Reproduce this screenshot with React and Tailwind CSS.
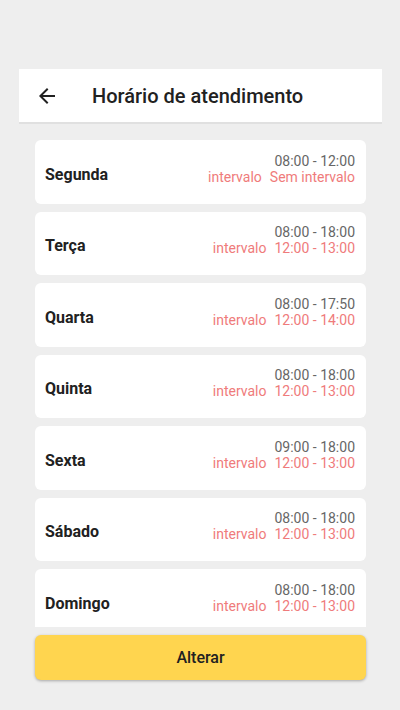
import React from "react";

const days = [
  { name: "Segunda", hours: "08:00 - 12:00", pause: "Sem intervalo" },
  { name: "Terça", hours: "08:00 - 18:00", pause: "12:00 - 13:00" },
  { name: "Quarta", hours: "08:00 - 17:50", pause: "12:00 - 14:00" },
  { name: "Quinta", hours: "08:00 - 18:00", pause: "12:00 - 13:00" },
  { name: "Sexta", hours: "09:00 - 18:00", pause: "12:00 - 13:00" },
  { name: "Sábado", hours: "08:00 - 18:00", pause: "12:00 - 13:00" },
  { name: "Domingo", hours: "08:00 - 18:00", pause: "12:00 - 13:00" },
];

const App = () => {
  return (
    <div className="min-h-screen bg-[#eeeeee] pt-[69px] font-['Roboto',sans-serif]">
      <div className="mx-[19px] w-[363px]">
        <div className="flex h-[55px] items-center border-b-2 border-[#e0e0e0] bg-white pl-4">
          <svg width="24" height="24" viewBox="0 0 24 24" className="text-[#212121]">
            <path
              fill="currentColor"
              d="M20 11H7.83l5.59-5.59L12 4l-8 8 8 8 1.41-1.41L7.83 13H20v-2z"
            />
          </svg>
          <h1 className="ml-[33px] text-[20px] font-medium text-[#212121]">
            Horário de atendimento
          </h1>
        </div>

        <div className="h-[503px] overflow-hidden px-4 pt-4">
          <div className="flex flex-col gap-2">
            {days.map((d) => (
              <div
                key={d.name}
                className="flex h-[63.5px] shrink-0 items-end justify-between rounded-md bg-white pb-[19px] pl-[10px] pr-[11px]"
              >
                <span className="mb-[2px] text-[16px] font-bold leading-4 text-[#212121]">
                  {d.name}
                </span>
                <div className="text-right text-[14px] leading-4">
                  <div className="text-[#666666]">{d.hours}</div>
                  <div className="flex justify-end gap-2 text-[#ef7b7b]">
                    <span>intervalo</span>
                    <span>{d.pause}</span>
                  </div>
                </div>
              </div>
            ))}
          </div>
        </div>

        <div className="px-4 pt-2">
          <button
            type="button"
            className="h-[45px] w-full rounded-md bg-[#ffd54f] text-[16px] font-medium text-[#212121] shadow-[0_1px_3px_rgba(0,0,0,0.3)]"
          >
            Alterar
          </button>
        </div>
      </div>
    </div>
  );
};

export default App;
